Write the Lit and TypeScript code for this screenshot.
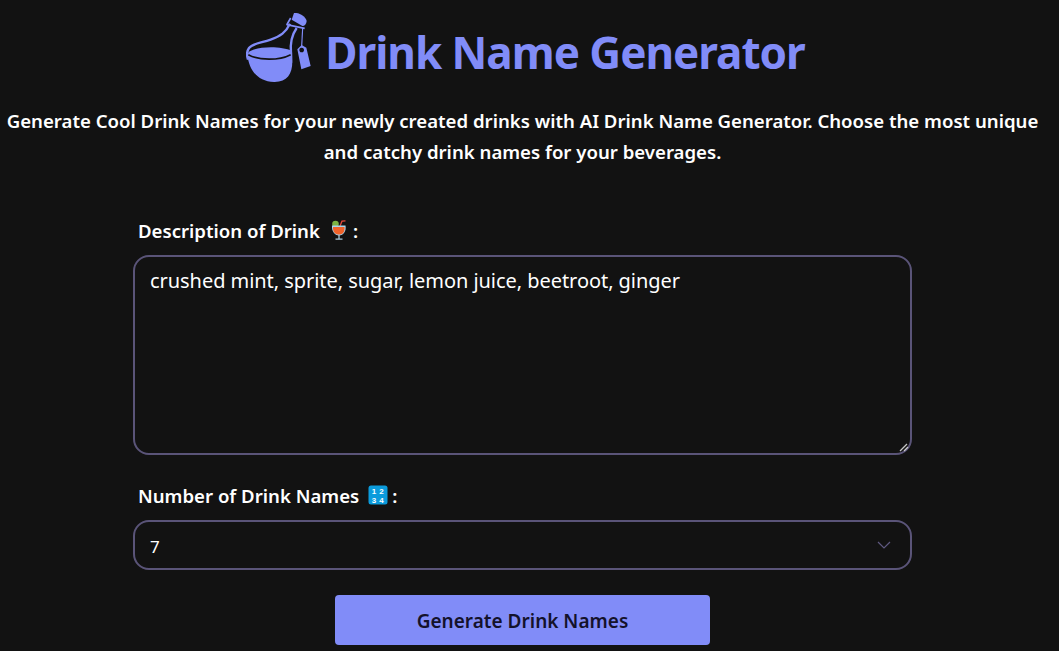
import { LitElement, html, css } from "lit";
import { customElement } from "lit/decorators.js";

@customElement("app-root")
export class AppRoot extends LitElement {
  static styles = css`
    :host {
      display: block;
      height: 651px;
      overflow: hidden;
      background: #121212;
      color: #fff;
      font-family: "Noto Sans", "Open Sans", sans-serif;
    }
    .page {
      width: 1045px;
      display: flex;
      flex-direction: column;
      align-items: center;
    }
    .head {
      display: flex;
      align-items: center;
      gap: 14px;
      height: 103px;
      padding-left: 6px;
    }
    .logo { width: 65px; height: 70px; display: block; margin-bottom: 7px; }
    h1 {
      margin: 0;
      font-size: 44px;
      line-height: 60px;
      letter-spacing: -1px;
      font-weight: 700;
      color: #818cf8;
    }
    .sub {
      margin: 0;
      width: 1045px;
      text-align: center;
      font-size: 18.6px;
      line-height: 31px;
      font-weight: 600;
      padding-top: 2px;
      height: 114px;
    }
    form { width: 779px; display: flex; flex-direction: column; }
    label {
      display: flex;
      align-items: center;
      box-sizing: border-box;
      padding: 0 0 2px 5px;
      height: 24px;
      font-size: 18.6px;
      font-weight: 600;
      gap: 9px;
    }
    .emoji { width: 20px; height: 20px; display: block; }
    .colon { margin-left: -5px; }
    .ta {
      margin-top: 12px;
      height: 200px;
      box-sizing: border-box;
      border: 2px solid #5a5478;
      border-radius: 16px;
      padding: 10px 15px;
      font-size: 20px;
      letter-spacing: -0.05px;
      line-height: 28px;
      position: relative;
    }
    .grip { position: absolute; right: 1px; bottom: 1px; width: 10px; height: 10px; display: block; }
    .l2 { margin-top: 29px; }
    .sel {
      margin-top: 12px;
      height: 50px;
      box-sizing: border-box;
      border: 2px solid #5a5478;
      border-radius: 16px;
      padding: 0 18px 0 15px;
      display: flex;
      align-items: center;
      justify-content: space-between;
      font-size: 17px;
    }
    .val { margin-top: 2px; }
    .chev { width: 16px; height: 16px; display: block; }
    button {
      align-self: center;
      margin-top: 25px;
      width: 375px;
      height: 50px;
      border: 0;
      padding: 2px 0 0;
      border-radius: 4px;
      background: #818cf8;
      color: #14122b;
      font: 600 19px "Noto Sans", "Open Sans", sans-serif;
    }
  `;

  render() {
    return html`<div class="page">
      <div class="head">
        <svg class="logo" viewBox="46 40 195 210">
          <path d="M178 72 C165 98 150 110 120 120 C90 130 64 132 55 145 C48 155 48 168 52 180" fill="none" stroke="#818cf8" stroke-width="7"/>
          <path d="M198 85 C184 105 178 130 181 160 L181 190" fill="none" stroke="#818cf8" stroke-width="7"/>
          <path d="M50 165 C55 210 80 246 130 247 C168 248 185 225 185 185 L184 154 C150 138 80 140 55 156 Z" fill="#818cf8"/>
          <path d="M53 165 C85 183 145 183 180 165" fill="none" stroke="#121212" stroke-width="5"/>
          <path d="M168 76 L180 55 M168 75 L222 86" fill="none" stroke="#818cf8" stroke-width="5"/>
          <path d="M190 40 C205 38 225 50 228 64 C227 74 221 81 214 78 L183 60 Z" fill="#818cf8"/>
          <path d="M216 85 L213 140" fill="none" stroke="#818cf8" stroke-width="3.5"/>
          <path fill-rule="evenodd" d="M200 149 L213 136 L227 144 L240 199 L212 209 Z M213 144 a7 7 0 1 0 .01 0 Z" fill="#818cf8"/>
        </svg>
        <h1>Drink Name Generator</h1>
      </div>
      <p class="sub">Generate Cool Drink Names for your newly created drinks with AI Drink Name Generator. Choose the most unique and catchy drink names for your beverages.</p>
      <form>
        <label>Description of Drink
          <svg class="emoji" viewBox="0 0 20 20">
            <path d="M11 6 L13 1.2 L16.5 0.8" stroke="#e8483a" stroke-width="1.3" fill="none"/>
            <circle cx="6.5" cy="4" r="3.3" fill="#7cb342"/>
            <path d="M3 5.5 H16.5 C17.5 11 14.5 15.5 10 15.5 C5.5 15.5 2.5 11 3 5.5Z" fill="#a9d4ea"/>
            <path d="M4 7 H15.5 C16 11.5 14 14.6 10 14.6 C6 14.6 3.7 11.5 4 7Z" fill="#f0622a"/>
            <path d="M10 15 V18.6 M6.5 19.2 H13.5" stroke="#a9c7d8" stroke-width="1.3" fill="none"/>
          </svg>
          <span class="colon">:</span></label>
        <div class="ta">crushed mint, sprite, sugar, lemon juice, beetroot, ginger
          <svg class="grip" viewBox="0 0 10 10"><path d="M1 9 L8 2 M5 9 L9 5" stroke="#c8c8c8" stroke-width="1.3"/></svg>
        </div>
        <label class="l2">Number of Drink Names
          <svg class="emoji" viewBox="0 0 20 20">
            <rect x="0.5" y="0.5" width="19" height="19" rx="2.5" fill="#0b9bdc"/>
            <text x="6" y="9" font-size="8" font-weight="700" fill="#fff" text-anchor="middle" font-family="Liberation Sans">1</text>
            <text x="13.5" y="9" font-size="8" font-weight="700" fill="#fff" text-anchor="middle" font-family="Liberation Sans">2</text>
            <text x="6" y="17.5" font-size="8" font-weight="700" fill="#fff" text-anchor="middle" font-family="Liberation Sans">3</text>
            <text x="13.5" y="17.5" font-size="8" font-weight="700" fill="#fff" text-anchor="middle" font-family="Liberation Sans">4</text>
          </svg>
          <span class="colon">:</span></label>
        <div class="sel"><span class="val">7</span>
          <svg class="chev" viewBox="0 0 16 16"><path d="M2 5 L8 11 L14 5" fill="none" stroke="#5f5980" stroke-width="1.2"/></svg>
        </div>
        <button type="button">Generate Drink Names</button>
      </form>
    </div>`;
  }
}
